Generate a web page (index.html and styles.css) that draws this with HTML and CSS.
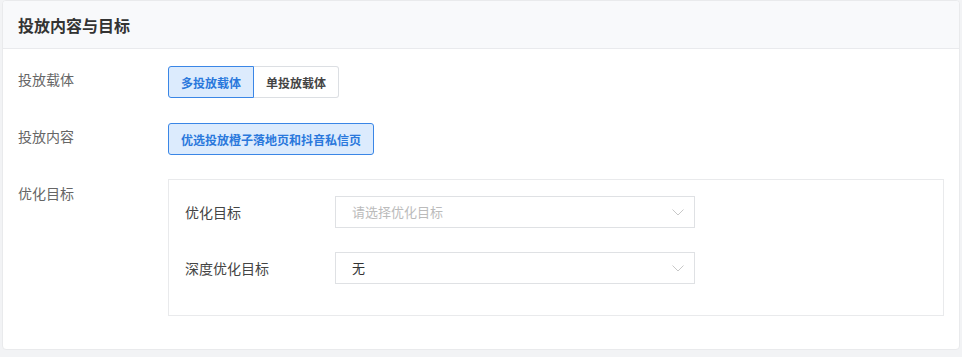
FILE: index.html
```html
<!DOCTYPE html>
<html lang="zh-CN">
<head>
<meta charset="utf-8">
<title>投放内容与目标</title>
<link rel="stylesheet" href="styles.css">
</head>
<body>
<div class="card">
  <div class="card-header">投放内容与目标</div>
  <div class="card-body">
    <div class="row">
      <div class="label">投放载体</div>
      <div class="btn-group">
        <span class="btn active">多投放载体</span>
        <span class="btn">单投放载体</span>
      </div>
    </div>
    <div class="row">
      <div class="label">投放内容</div>
      <div class="btn-group">
        <span class="btn active single">优选投放橙子落地页和抖音私信页</span>
      </div>
    </div>
    <div class="row">
      <div class="label">优化目标</div>
      <div class="sub-box">
        <div class="sub-row">
          <div class="sub-label">优化目标</div>
          <div class="select">
            <span class="placeholder">请选择优化目标</span>
            <svg class="chev" width="12" height="7" viewBox="0 0 12 7"><path d="M0.5 0.5 L6 6 L11.5 0.5" fill="none" stroke="#c8c8c8" stroke-width="1"/></svg>
          </div>
        </div>
        <div class="sub-row">
          <div class="sub-label">深度优化目标</div>
          <div class="select">
            <span class="value">无</span>
            <svg class="chev" width="12" height="7" viewBox="0 0 12 7"><path d="M0.5 0.5 L6 6 L11.5 0.5" fill="none" stroke="#c8c8c8" stroke-width="1"/></svg>
          </div>
        </div>
      </div>
    </div>
  </div>
</div>
</body>
</html>
```
FILE: styles.css
```css
* { box-sizing: border-box; }
html, body { margin: 0; padding: 0; }
body {
  background: #f2f3f5;
  font-family: "Noto Sans CJK SC", "Noto Sans", sans-serif;
  width: 962px;
  height: 357px;
  overflow: hidden;
}
.card {
  margin: 0 2px;
  width: 958px;
  height: 350px;
  background: #fff;
  border: 1px solid #e9eaec;
  border-radius: 4px;
  overflow: hidden;
}
.card-header {
  height: 48px;
  background: #f8f9fb;
  border-bottom: 1px solid #e9eaed;
  padding-left: 15px;
  display: flex;
  align-items: center;
  font-size: 16px;
  font-weight: 700;
  color: #333;
}
.card-body {
  padding: 17px 15px 0 15px;
  display: flex;
  flex-direction: column;
  gap: 25px;
}
.row {
  display: flex;
  align-items: flex-start;
}
.label {
  width: 150px;
  flex: none;
  line-height: 26px;
  font-size: 14px;
  color: #666;
}
.btn-group {
  display: flex;
}
.btn {
  height: 32px;
  padding: 0 12px;
  display: flex;
  align-items: center;
  font-size: 12px;
  font-weight: 700;
  color: #444;
  border: 1px solid #dcdfe3;
  background: #fff;
}
.btn:first-child { border-radius: 3px 0 0 3px; }
.btn:last-child { border-radius: 0 3px 3px 0; border-left: none; }
.btn.active {
  background: #dcebfd;
  border-color: #3a86e6;
  color: #2a78dc;
}
.btn.single { border-radius: 3px; border-left: 1px solid #3a86e6; }
.sub-box {
  width: 776px;
  margin-top: -1px;
  border: 1px solid #e9eaec;
  padding: 16px 16px 31px 16px;
  display: flex;
  flex-direction: column;
  gap: 24px;
}
.sub-row {
  display: flex;
  align-items: center;
}
.sub-label {
  width: 150px;
  flex: none;
  font-size: 14px;
  color: #444;
  line-height: 28px;
}
.select {
  width: 360px;
  height: 32px;
  border: 1px solid #dfe1e4;
  display: flex;
  align-items: center;
  justify-content: space-between;
  padding: 0 10px 0 16px;
  font-size: 13px;
  line-height: 20px;
}
.placeholder { color: #bbb; }
.value { color: #333; }
.chev { display: block; }
```
